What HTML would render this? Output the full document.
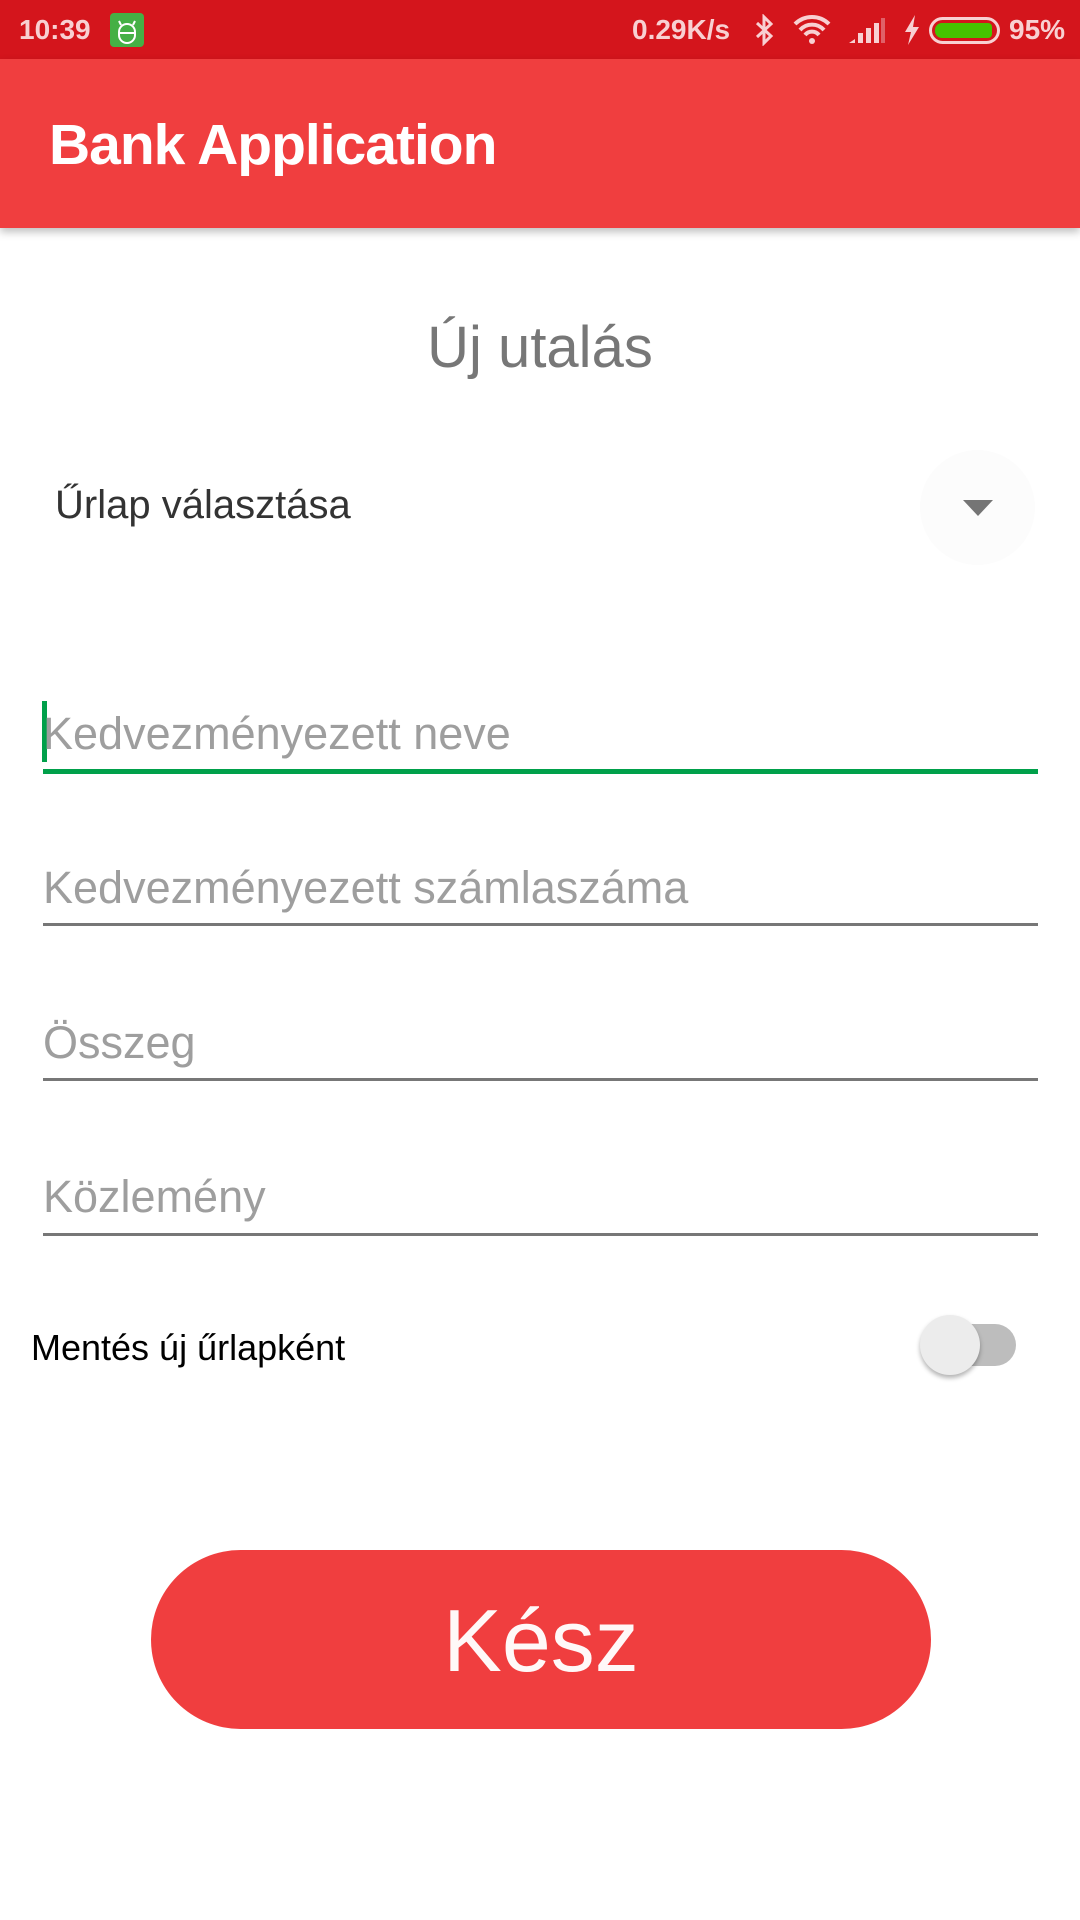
<!DOCTYPE html>
<html><head><meta charset="utf-8">
<style>
*{margin:0;padding:0;box-sizing:border-box}
html,body{width:1080px;height:1920px;background:#fff;overflow:hidden;font-family:"Liberation Sans",sans-serif}
.sb{position:absolute;left:0;top:0;width:1080px;height:59px;background:#d4151c;color:#f8d0d2;font-weight:bold;font-size:28px}
.ab{position:absolute;left:0;top:59px;width:1080px;height:169px;background:#f03e3f;box-shadow:0 4px 8px rgba(0,0,0,.25)}
.ab span{position:absolute;left:49px;top:53px;color:#fff;font-size:57px;font-weight:bold;letter-spacing:-1px}
.t{position:absolute;white-space:nowrap}
.line{position:absolute;left:43px;width:995px;height:3px;background:#777}
.ph{position:absolute;left:43px;color:#9e9e9e;font-size:45px;white-space:nowrap}
</style></head><body>
<div class="sb">
 <div class="t" style="left:19px;top:14px">10:39</div>
 <div style="position:absolute;left:110px;top:13px;width:34px;height:34px;background:#45b045;border-radius:4px"></div>
 <svg style="position:absolute;left:110px;top:13px" width="34" height="34" viewBox="0 0 34 34"><path d="M9 19a8 8 0 0 1 16 0v3a8 8 0 0 1-16 0z M11 12l-2-4 M23 12l2-4 M9 20h16" fill="none" stroke="#fff" stroke-width="2"/></svg>
 <div class="t" style="left:632px;top:14px">0.29K/s</div>
 <svg style="position:absolute;left:752px;top:14px" width="24" height="32" viewBox="0 0 24 32"><path d="M5 9l14 13-7 7V3l7 7L5 23" fill="none" stroke="#f8d0d2" stroke-width="3"/></svg>
 <svg style="position:absolute;left:792px;top:14px" width="40" height="30" viewBox="0 0 40 30"><path d="M3 10a24 24 0 0 1 34 0M8 16a16 16 0 0 1 24 0M13 21a9 9 0 0 1 14 0" fill="none" stroke="#f8d0d2" stroke-width="4"/><circle cx="20" cy="27" r="3" fill="#f8d0d2"/></svg>
 <svg style="position:absolute;left:849px;top:15px" width="38" height="30" viewBox="0 0 38 30"><path d="M0 28h6v-4zM9 28h5v-10h-5zM17 28h5v-15h-5zM25 28h5v-20h-5z" fill="#f8d0d2"/><rect x="32" y="3" width="4" height="25" fill="#e06068"/></svg>
 <svg style="position:absolute;left:903px;top:15px" width="18" height="30" viewBox="0 0 18 30"><path d="M12 0L2 17h6L5 30 16 12h-6z" fill="#f8d0d2"/></svg>
 <div style="position:absolute;left:929px;top:17px;width:71px;height:27px;border:3px solid #f8d0d2;border-radius:14px;padding:3px"><div style="width:57px;height:15px;background:#46c200;border-radius:7px 4px 4px 7px"></div></div>
 <div class="t" style="left:1009px;top:14px">95%</div>
</div>
<div class="ab"><span>Bank Application</span></div>
<div class="t" style="left:0;width:1080px;text-align:center;top:314px;font-size:58px;color:#777;font-weight:300">Új utalás</div>
<div class="t" style="left:55px;top:483px;font-size:40px;color:#333;font-weight:300">Űrlap választása</div>
<div style="position:absolute;left:920px;top:450px;width:115px;height:115px;border-radius:50%;background:#fcfcfc"></div>
<svg style="position:absolute;left:963px;top:500px" width="30" height="18" viewBox="0 0 30 18"><path d="M0 0h30L15 16z" fill="#757575"/></svg>
<div style="position:absolute;left:42px;top:701px;width:5px;height:61px;background:#00a04a"></div>
<div class="ph" style="top:708px">Kedvezményezett neve</div>
<div style="position:absolute;left:43px;top:769px;width:995px;height:5px;background:#00a04a"></div>
<div class="ph" style="top:862px">Kedvezményezett számlaszáma</div>
<div class="line" style="top:923px"></div>
<div class="ph" style="top:1017px">Összeg</div>
<div class="line" style="top:1078px"></div>
<div class="ph" style="top:1171px">Közlemény</div>
<div class="line" style="top:1233px"></div>
<div class="t" style="left:31px;top:1327px;font-size:36px;color:#000">Mentés új űrlapként</div>
<div style="position:absolute;left:940px;top:1324px;width:76px;height:42px;border-radius:21px;background:#bdbdbd"></div>
<div style="position:absolute;left:920px;top:1315px;width:60px;height:60px;border-radius:50%;background:#ececec;box-shadow:0 3px 5px rgba(0,0,0,.3)"></div>
<div style="position:absolute;left:151px;top:1550px;width:780px;height:179px;border-radius:90px;background:#f03e3f"></div>
<div class="t" style="left:151px;width:780px;text-align:center;top:1590px;font-size:88px;color:#fff8f8;font-weight:300">Kész</div>
</body></html>
